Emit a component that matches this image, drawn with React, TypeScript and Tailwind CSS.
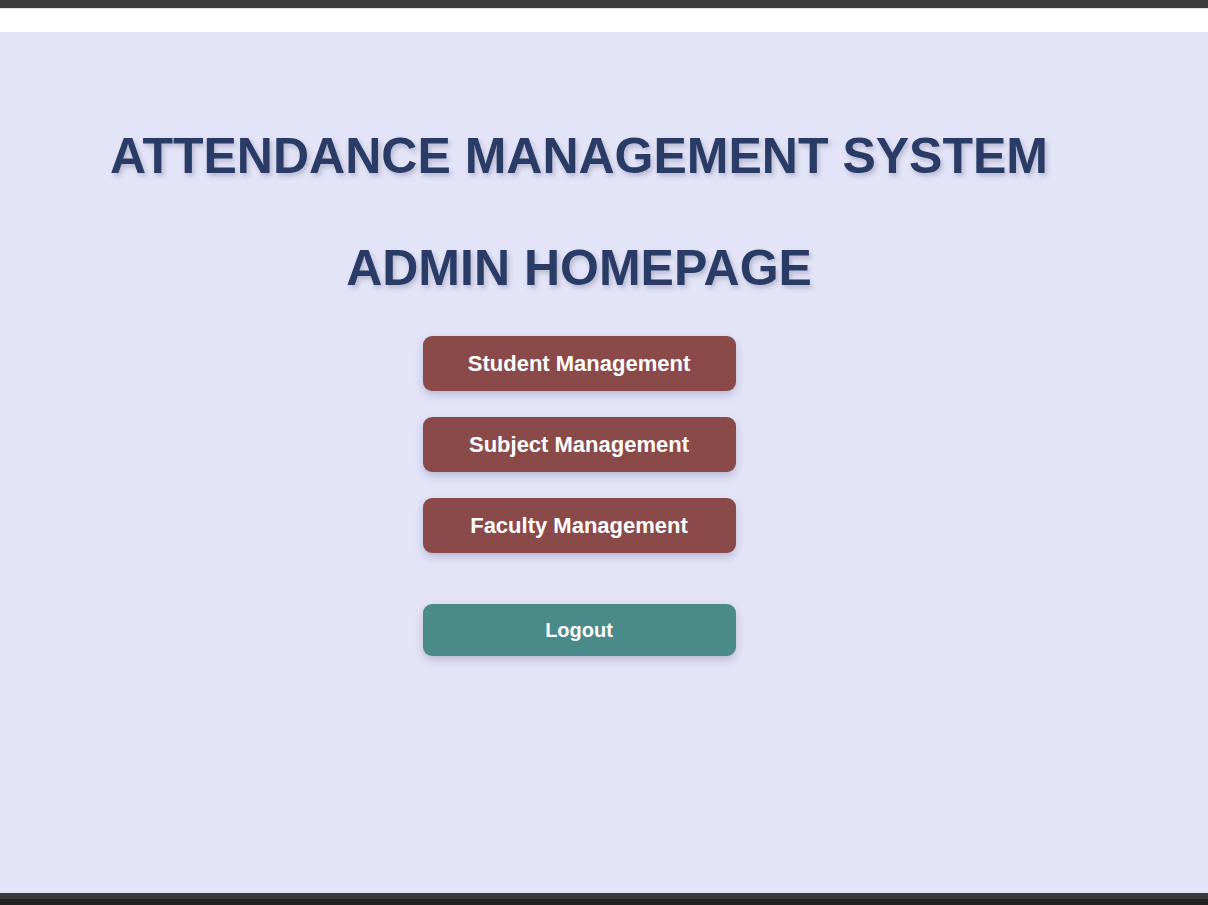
import React from 'react';

const menuItems = ['Student Management', 'Subject Management', 'Faculty Management'];

const App: React.FC = () => {
  return (
    <div className="flex h-[905px] w-[1208px] flex-col overflow-hidden bg-white font-['Liberation_Sans',Arial,sans-serif]">
      <div className="h-[8px] shrink-0 bg-[#3b3b3b]" />
      <div className="h-[24px] shrink-0 border-t border-[#e0e0e0] bg-white" />

      <main className="flex flex-1 flex-col items-center bg-[#e4e4f8] pr-[50px] pt-[96px]">
        <h1 className="text-[50px] font-bold leading-[57px] text-[#2a3c66] [text-shadow:2px_3px_5px_rgba(40,50,90,0.25)]">
          ATTENDANCE MANAGEMENT SYSTEM
        </h1>
        <h2 className="mt-[55px] text-[50px] font-bold leading-[57px] text-[#2a3c66] [text-shadow:2px_3px_5px_rgba(40,50,90,0.25)]">
          ADMIN HOMEPAGE
        </h2>

        <div className="mt-[39px] flex flex-col gap-[26px]">
          {menuItems.map((label) => (
            <button
              key={label}
              className="h-[55px] w-[313px] rounded-[9px] bg-[#8b4a4a] text-[22px] font-bold text-white shadow-[0_4px_8px_rgba(60,60,110,0.25)]"
            >
              {label}
            </button>
          ))}
        </div>

        <button className="mt-[51px] h-[52px] w-[313px] rounded-[9px] bg-[#4a8b8a] text-[20px] font-bold text-white shadow-[0_4px_8px_rgba(60,60,110,0.25)]">
          Logout
        </button>
      </main>

      <div className="h-[6px] shrink-0 bg-[#3a3a3a]" />
      <div className="h-[6px] shrink-0 bg-[#222222]" />
    </div>
  );
};

export default App;
